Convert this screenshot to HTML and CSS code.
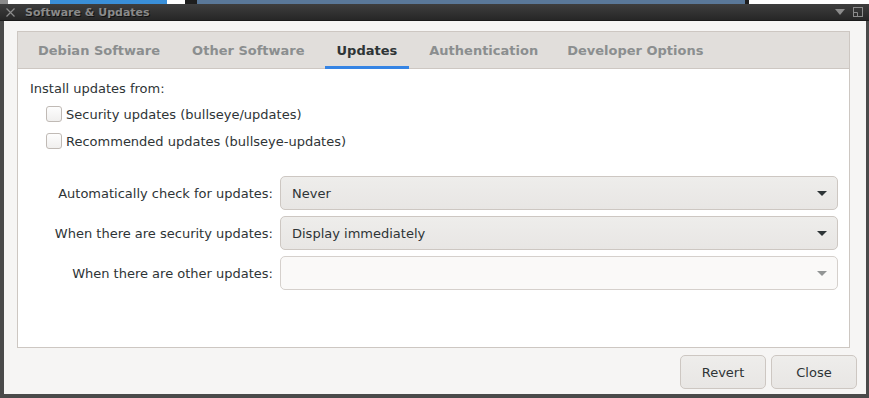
FILE: index.html
```html
<!DOCTYPE html>
<html lang="en">
<head>
    <meta charset="UTF-8">
    <title>Software &amp; Updates</title>
    <link rel="stylesheet" href="styles.css">
</head>
<body>
    <div class="desk-strip">
        <span class="strip-a"></span>
        <span class="strip-b"></span>
        <span class="strip-blue"></span>
        <span class="strip-c"></span>
        <span class="strip-d"></span>
        <span class="strip-sky"></span>
        <span class="strip-e"></span>
        <span class="strip-f"></span>
    </div>
    <div class="window">
        <div class="titlebar">
            <svg class="tb-close" width="9" height="9" viewBox="0 0 9 9">
                <path d="M0.5 0.5 L8.5 8.5 M8.5 0.5 L0.5 8.5" stroke="#8c8c8c" stroke-width="1.2"/>
            </svg>
            <span class="tb-title">Software &amp; Updates</span>
            <span class="tb-spacer"></span>
            <svg class="tb-menu" width="10" height="6" viewBox="0 0 10 6">
                <path d="M0 0 H10 L5 6 Z" fill="#8c8c8c"/>
            </svg>
            <svg class="tb-max" width="10" height="10" viewBox="0 0 10 10">
                <rect x="0.5" y="0.5" width="9" height="9" fill="none" stroke="#8c8c8c"/>
                <path d="M0.5 5.5 H4.5 V9.5" fill="none" stroke="#8c8c8c"/>
            </svg>
        </div>
        <div class="window-body">
            <div class="notebook">
                <div class="tabs">
                    <div class="tab">Debian Software</div>
                    <div class="tab">Other Software</div>
                    <div class="tab active">Updates</div>
                    <div class="tab">Authentication</div>
                    <div class="tab">Developer Options</div>
                </div>
                <div class="page">
                    <div class="section-label">Install updates from:</div>
                    <label class="check-row"><span class="check"></span>Security updates (bullseye/updates)</label>
                    <label class="check-row"><span class="check"></span>Recommended updates (bullseye-updates)</label>

                    <div class="combo-grid">
                        <div class="combo-label">Automatically check for updates:</div>
                        <div class="combo"><span>Never</span><i class="arrow"></i></div>
                        <div class="combo-label">When there are security updates:</div>
                        <div class="combo"><span>Display immediately</span><i class="arrow"></i></div>
                        <div class="combo-label">When there are other updates:</div>
                        <div class="combo disabled"><span></span><i class="arrow"></i></div>
                    </div>
                </div>
            </div>
            <div class="actions">
                <button class="btn">Revert</button>
                <button class="btn">Close</button>
            </div>
        </div>
    </div>
</body>
</html>
```

FILE: styles.css
```css
:root {
    --win-bg: #f6f5f4;
    --border: #cdc7c2;
    --text: #2e3436;
    --tab-dim: #8b8e8f;
    --accent: #3584e4;
}
* { box-sizing: border-box; }
body {
    margin: 0;
    width: 869px;
    height: 398px;
    overflow: hidden;
    background: #2a2a2a;
    font-family: "DejaVu Sans", sans-serif;
    font-size: 13px;
    color: var(--text);
}
.desk-strip {
    display: flex;
    height: 4px;
}
.desk-strip span { display: block; height: 100%; }
.strip-a { width: 8px; background: #8a8a8a; }
.strip-b { width: 42px; background: #fff; }
.strip-blue { width: 117px; background: #3a8fd8; }
.strip-c { width: 18px; background: #fff; }
.strip-d { width: 12px; background: #1e1e1e; }
.strip-sky { width: 548px; background: #5a7899; }
.strip-e { width: 4px; background: #1e1e1e; }
.strip-f { flex: 1; background: #fff; }

.window {
    height: 394px;
    display: flex;
    flex-direction: column;
    background: #3c3c3c;
    border-left: 4px solid #4a4a4a;
    border-right: 3px solid #4a4a4a;
    border-bottom: 4px solid #4a4a4a;
}
.titlebar {
    height: 17px;
    margin-left: -4px;
    margin-right: -3px;
    padding: 0 6px 0 6px;
    display: flex;
    align-items: center;
    background: linear-gradient(#3e3e3e, #262626);
    border-bottom: 1px solid #1a1a1a;
}
.tb-close { margin-right: 10px; }
.tb-title {
    font-size: 11px;
    font-weight: bold;
    color: #8a8a8a;
    text-shadow: 1px 1px 0 #111;
    padding-top: 1px;
}
.tb-spacer { flex: 1; }
.tb-menu { margin-right: 8px; }

.window-body {
    flex: 1;
    background: var(--win-bg);
    padding: 10px 9px 5px 13px;
    display: flex;
    flex-direction: column;
}
.notebook {
    width: 833px;
    height: 317px;
    border: 1px solid var(--border);
    background: #fff;
    display: flex;
    flex-direction: column;
}
.tabs {
    height: 37px;
    display: flex;
    align-items: stretch;
    padding-left: 4px;
    background: #e1dedb;
    border-bottom: 1px solid var(--border);
}
.tab {
    margin: 0 4px;
    padding: 2px 12px 0 12px;
    display: flex;
    align-items: center;
    font-weight: bold;
    color: var(--tab-dim);
    border-bottom: 3px solid transparent;
    margin-bottom: -1px;
}
.tab:nth-child(4) { margin-right: 2px; padding-right: 11px; }
.tab.active {
    color: var(--text);
    border-bottom-color: var(--accent);
}
.page {
    flex: 1;
    padding: 13px 11px 0 12px;
}
.section-label {
    height: 14px;
    line-height: 14px;
}
.check-row {
    display: flex;
    align-items: center;
    height: 18px;
    margin-top: 9px;
    padding-left: 16px;
}
.check {
    width: 16px;
    height: 16px;
    margin-right: 4px;
    border: 1px solid #c0bab5;
    border-radius: 3px;
    background: linear-gradient(#fdfdfd, #f0efee);
}
.combo-grid {
    margin-top: 26px;
    display: grid;
    grid-template-columns: 243px 1fr;
    column-gap: 7px;
    row-gap: 6px;
    align-items: center;
}
.combo-label { text-align: right; }
.combo {
    height: 34px;
    display: flex;
    align-items: center;
    justify-content: space-between;
    padding: 0 10px 0 11px;
    border: 1px solid var(--border);
    border-radius: 5px;
    background: linear-gradient(#eeedeb, #e8e6e4);
}
.arrow {
    width: 0;
    height: 0;
    border-left: 5px solid transparent;
    border-right: 5px solid transparent;
    border-top: 5px solid #2e3436;
}
.combo.disabled {
    background: #faf9f8;
    border-color: #d5d0cc;
}
.combo.disabled .arrow { border-top-color: #929595; }

.actions {
    margin-top: 7px;
    display: flex;
    justify-content: flex-end;
    gap: 5px;
}
.btn {
    width: 86px;
    height: 34px;
    font-family: inherit;
    font-size: 13px;
    color: var(--text);
    border: 1px solid var(--border);
    border-radius: 5px;
    background: linear-gradient(#eeedeb, #e8e6e4);
}
```
